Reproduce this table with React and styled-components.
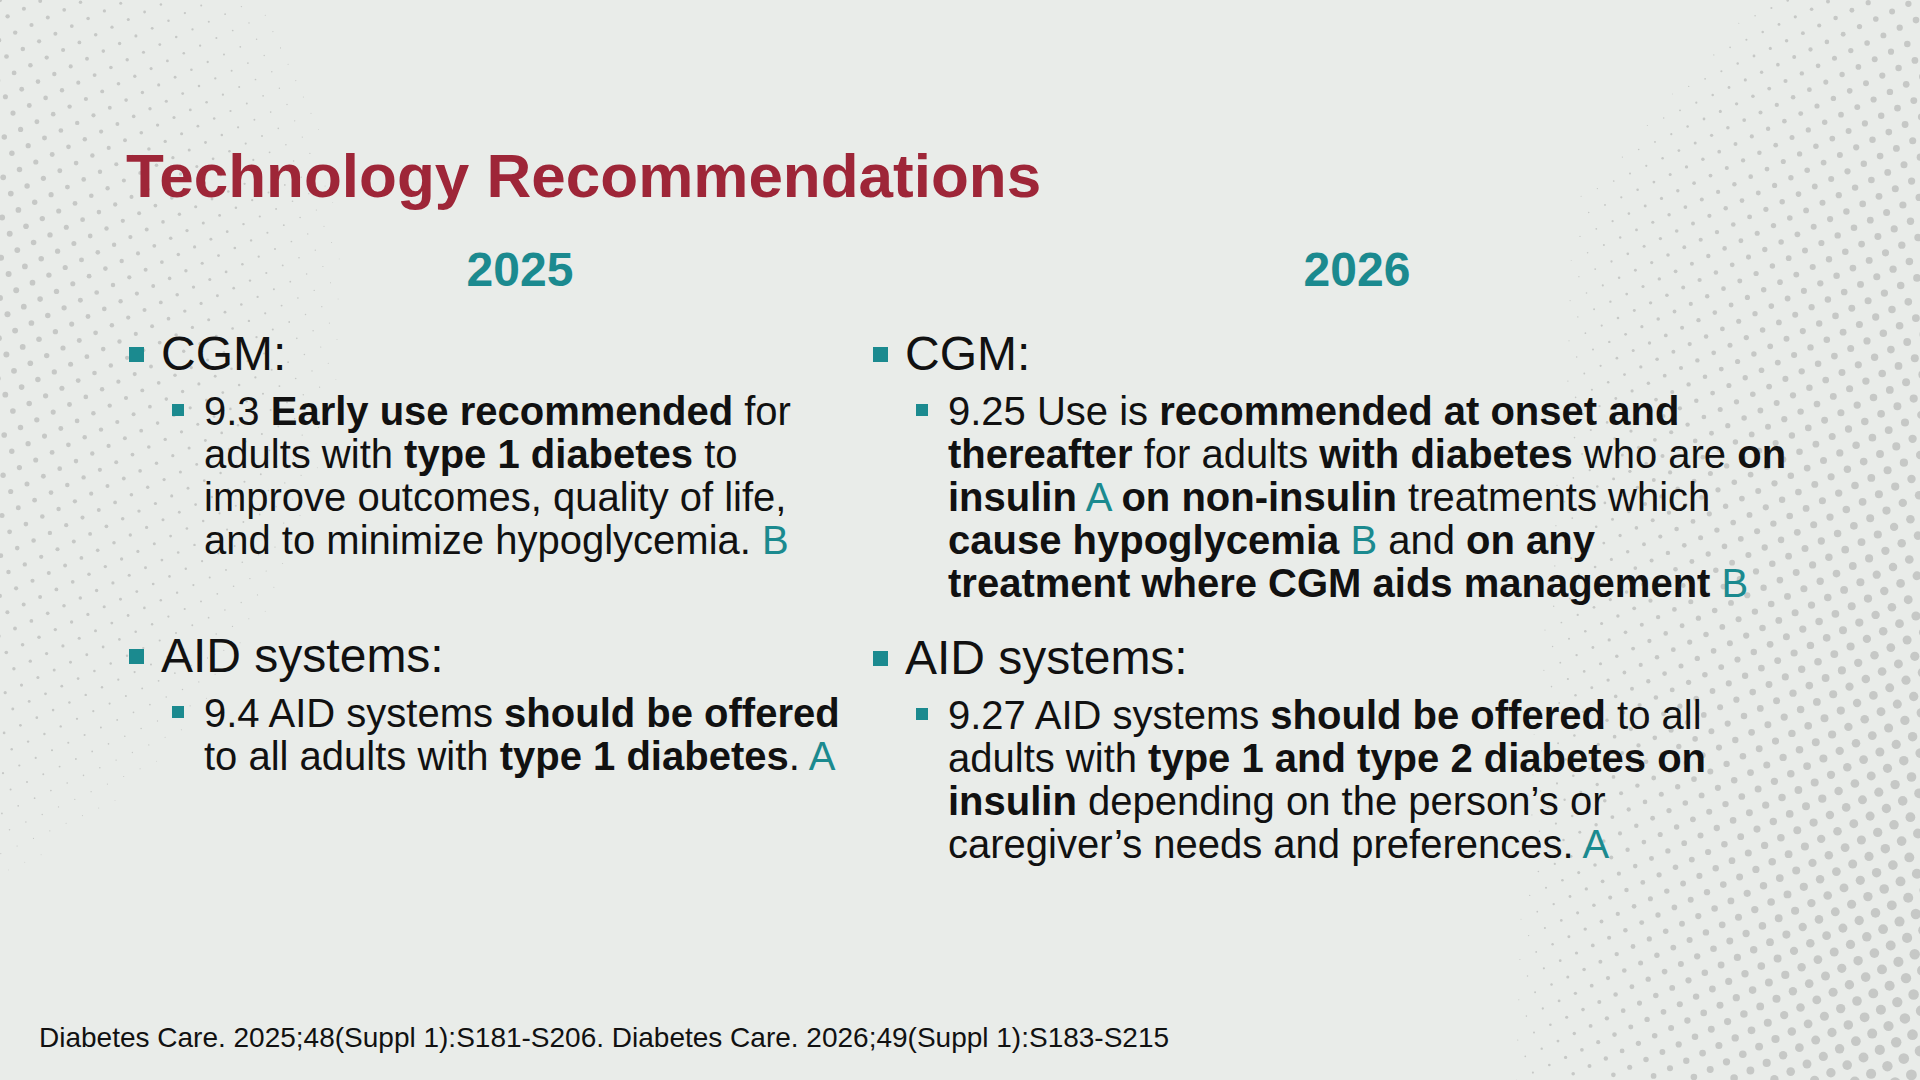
import React, { useMemo } from 'react'
import styled, { createGlobalStyle } from 'styled-components'

const TEAL = '#1b8a8f'

const GlobalStyle = createGlobalStyle`
  html, body {
    margin: 0;
    padding: 0;
  }
  body {
    background: #e9ece9;
    font-family: "Liberation Sans", Arial, sans-serif;
  }
`

// halftone dots drawn once into an svg, used as the slide background
const leftRadius = (x, y) => {
  const dx = (x + 200) / 1.4
  const dy = (y - 300) / 1.6
  const d = Math.sqrt(dx * dx + dy * dy)
  const t = Math.min(1, Math.max(0, (420 - d) / 280))
  return 3.1 * Math.pow(t, 0.9)
}

const rightRadius = (x, y) => {
  const x0 = y < 200 ? 1750 - 190 * (y / 200) : 1560 - 60 * ((y - 200) / 880)
  const t = (x - x0) / (1920 - x0)
  if (t <= 0) return 0
  const rMax = 3.3 + 2.2 * (y / 1080)
  return rMax * Math.pow(Math.min(t, 1), 0.65)
}

const buildDots = () => {
  const s = 18
  const ang = (-25 * Math.PI) / 180
  const ax = s * Math.cos(ang)
  const ay = s * Math.sin(ang)
  const bx = -ay
  const by = ax
  const circles = []
  for (let i = -80; i <= 160; i++) {
    for (let j = -80; j <= 140; j++) {
      const x = i * ax + j * bx
      const y = i * ay + j * by
      if (x < -8 || x > 1928 || y < -8 || y > 1088) continue
      const r = Math.max(leftRadius(x, y), rightRadius(x, y))
      if (r < 0.45) continue
      circles.push(`<circle cx="${x.toFixed(1)}" cy="${y.toFixed(1)}" r="${r.toFixed(2)}"/>`)
    }
  }
  const svg = `<svg xmlns="http://www.w3.org/2000/svg" width="1920" height="1080"><g fill="#c6c8c6">${circles.join('')}</g></svg>`
  return `url("data:image/svg+xml,${encodeURIComponent(svg)}")`
}

const Slide = styled.div`
  width: 1920px;
  height: 1080px;
  overflow: hidden;
  box-sizing: border-box;
  padding-top: 145px;
  display: flex;
  flex-direction: column;
  background-color: #e9ece9;
  background-image: ${p => p.$dots};
  background-repeat: no-repeat;
  color: #111;
`

const Title = styled.h1`
  margin: 0 0 0 126px;
  font-size: 62px;
  line-height: 62px;
  font-weight: 700;
  color: #9e2638;
`

const YearRow = styled.div`
  display: grid;
  grid-template-columns: 782px 892px;
  margin: 39px 0 0 129px;
`

const Year = styled.div`
  text-align: center;
  font-size: 48px;
  line-height: 48px;
  font-weight: 700;
  color: ${TEAL};
`

const Columns = styled.div`
  display: grid;
  grid-template-columns: 744px 1fr;
  margin: 34px 0 0 129px;
`

const Column = styled.div`
  display: flex;
  flex-direction: column;
`

const Section = styled.div`
  display: flex;
  flex-direction: column;
  & + & {
    margin-top: 27px;
  }
`

const Topic = styled.div`
  display: flex;
  align-items: flex-start;
  gap: 17px;
  font-size: 48px;
  line-height: 52px;
`

const Square = styled.span`
  flex: none;
  width: ${p => p.$size}px;
  height: ${p => p.$size}px;
  margin-top: ${p => p.$top}px;
  background: ${TEAL};
`

const Item = styled.div`
  display: flex;
  align-items: flex-start;
  gap: 20px;
  margin: 10px 0 0 43px;
  font-size: 40px;
  line-height: 43px;
  white-space: nowrap;
`

const Blank = styled.div`
  height: 41px;
`

const Grade = styled.span`
  color: ${TEAL};
`

const Footer = styled.div`
  margin: auto 0 0 39px;
  padding-bottom: 26px;
  font-size: 28px;
  line-height: 32px;
  color: #111;
`

const Bullet = ({ children }) => (
  <Topic>
    <Square $size={15} $top={19} />
    <span>{children}</span>
  </Topic>
)

const Sub = ({ children }) => (
  <Item>
    <Square $size={12} $top={14} />
    <span>{children}</span>
  </Item>
)

export default function App() {
  const dots = useMemo(buildDots, [])
  return (
    <>
      <GlobalStyle />
      <Slide $dots={dots}>
        <Title>Technology Recommendations</Title>
        <YearRow>
          <Year>2025</Year>
          <Year>2026</Year>
        </YearRow>
        <Columns>
          <Column>
            <Section>
              <Bullet>CGM:</Bullet>
              <Sub>
                9.3 <b>Early use recommended</b> for
                <br />
                adults with <b>type 1 diabetes</b> to
                <br />
                improve outcomes, quality of life,
                <br />
                and to minimize hypoglycemia. <Grade>B</Grade>
              </Sub>
              <Blank />
            </Section>
            <Section>
              <Bullet>AID systems:</Bullet>
              <Sub>
                9.4 AID systems <b>should be offered</b>
                <br />
                to all adults with <b>type 1 diabetes</b>. <Grade>A</Grade>
              </Sub>
            </Section>
          </Column>
          <Column>
            <Section>
              <Bullet>CGM:</Bullet>
              <Sub>
                9.25 Use is <b>recommended at onset and</b>
                <br />
                <b>thereafter</b> for adults <b>with diabetes</b> who are <b>on</b>
                <br />
                <b>insulin</b> <Grade>A</Grade> <b>on non-insulin</b> treatments which
                <br />
                <b>cause hypoglycemia</b> <Grade>B</Grade> and <b>on any</b>
                <br />
                <b>treatment where CGM aids management</b> <Grade>B</Grade>
              </Sub>
            </Section>
            <Section>
              <Bullet>AID systems:</Bullet>
              <Sub>
                9.27 AID systems <b>should be offered</b> to all
                <br />
                adults with <b>type 1 and type 2 diabetes on</b>
                <br />
                <b>insulin</b> depending on the person’s or
                <br />
                caregiver’s needs and preferences. <Grade>A</Grade>
              </Sub>
            </Section>
          </Column>
        </Columns>
        <Footer>
          Diabetes Care. 2025;48(Suppl 1):S181-S206. Diabetes Care. 2026;49(Suppl 1):S183-S215
        </Footer>
      </Slide>
    </>
  )
}
